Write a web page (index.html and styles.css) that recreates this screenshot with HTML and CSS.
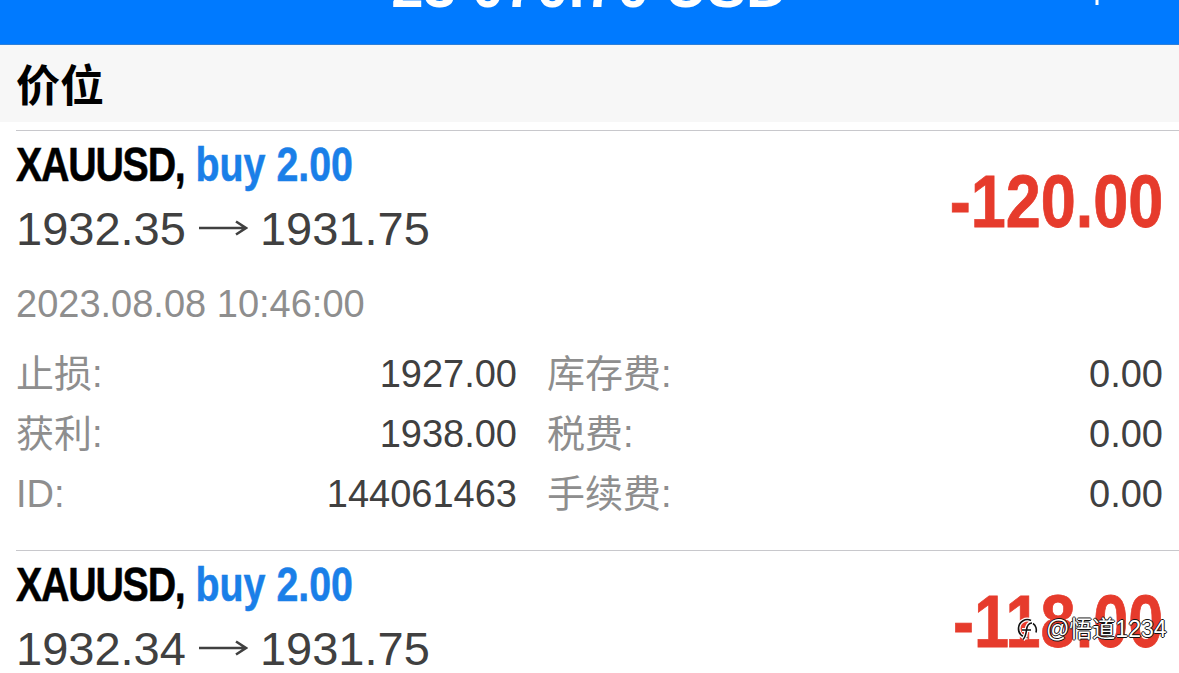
FILE: index.html
```html
<!DOCTYPE html>
<html lang="zh">
<head>
    <meta charset="UTF-8">
    <meta name="viewport" content="width=device-width, initial-scale=1.0">
    <title>交易</title>
    <link rel="stylesheet" href="styles.css">
</head>
<body>

    <header class="topbar">
        <span></span>
        <h1 class="balance">23 070.70 USD</h1>
        <svg class="add-icon" width="40" height="40" viewBox="0 0 40 40">
            <path d="M20 0v40M0 20h40" stroke="#fff" stroke-width="3" fill="none"/>
        </svg>
    </header>

    <div class="section-title">价位</div>

    <ul class="positions">
        <li class="position">
            <div class="position-head">
                <div class="position-main">
                    <div class="symbol"><span class="symbol-text"><span class="name">XAUUSD,</span> <span class="side">buy 2.00</span></span></div>
                    <div class="prices">1932.35<svg class="arrow" role="img" aria-label="→" width="50" height="20" viewBox="0 0 50 20"><path d="M1 10h47M38 3.5l10 6.5-10 6.5" stroke="#404040" stroke-width="2.6" fill="none"/></svg>1931.75</div>
                </div>
                <div class="profit"><span class="profit-text">-120.00</span></div>
            </div>
            <div class="opened">2023.08.08 10:46:00</div>
            <div class="details">
                <div class="detail"><span class="label">止损:</span><span class="value">1927.00</span></div>
                <div class="detail"><span class="label">库存费:</span><span class="value">0.00</span></div>
                <div class="detail"><span class="label">获利:</span><span class="value">1938.00</span></div>
                <div class="detail"><span class="label">税费:</span><span class="value">0.00</span></div>
                <div class="detail"><span class="label">ID:</span><span class="value">144061463</span></div>
                <div class="detail"><span class="label">手续费:</span><span class="value">0.00</span></div>
            </div>
        </li>
        <li class="position">
            <div class="position-head">
                <div class="position-main">
                    <div class="symbol"><span class="symbol-text"><span class="name">XAUUSD,</span> <span class="side">buy 2.00</span></span></div>
                    <div class="prices">1932.34<svg class="arrow" role="img" aria-label="→" width="50" height="20" viewBox="0 0 50 20"><path d="M1 10h47M38 3.5l10 6.5-10 6.5" stroke="#404040" stroke-width="2.6" fill="none"/></svg>1931.75</div>
                </div>
                <div class="profit"><span class="profit-text">-118.00</span></div>
            </div>
        </li>
    </ul>

    <!-- watermark over the second row -->
    <div class="watermark">
        <svg width="22" height="24" viewBox="0 0 22 24">
            <path d="M15 3.5C10 1 3 4 2.5 11c-.4 5.5 3.5 9.5 9 9.5" stroke="#fff" stroke-width="4" fill="none"/>
            <path d="M15 3.5C10 1 3 4 2.5 11c-.4 5.5 3.5 9.5 9 9.5" stroke="#111" stroke-width="1.6" fill="none"/>
            <path d="M16 6c-4 0-5 3-5.5 7-.4 3.5-1 7-3.5 9.5M6 13h9" stroke="#fff" stroke-width="4" fill="none"/>
            <path d="M16 6c-4 0-5 3-5.5 7-.4 3.5-1 7-3.5 9.5M6 13h9" stroke="#111" stroke-width="1.6" fill="none"/>
            <path d="M17 6.5c3 2 4 6 3 9" stroke="#111" stroke-width="1.6" fill="none"/>
        </svg>
        <span class="watermark-text">@悟道1234</span>
    </div>
</body>
</html>
```

FILE: styles.css
```css
:root {
    --ios-blue: #007aff;
    --buy-blue: #1a7fe8;
    --loss-red: #e63b2c;
    --section-grey: #f7f7f7;
    --separator: #c8c8cc;
    --text-dark: #404040;
    --text-grey: #8e8e8e;
    --main-font: "Liberation Sans", "Noto Sans CJK SC", sans-serif;
}

* {
    font-family: var(--main-font);
}

html, body {
    margin: 0;
    height: 100%;
    overflow: hidden;
}

body {
    position: relative;
    background-color: #fff;
}

.topbar {
    display: grid;
    grid-template-columns: 1fr auto 1fr;
    height: 44px;
    overflow: hidden;
    background-color: var(--ios-blue);
    border-bottom: 1px solid #2f80d8;
}
.topbar .balance {
    margin: -42px 0 0;
    font-size: 58px;
    line-height: 58px;
    font-weight: bold;
    color: #fff;
}
.topbar .add-icon {
    justify-self: end;
    margin: -35px 62px 0 0;
}

.section-title {
    height: 77px;
    padding-left: 16px;
    background-color: var(--section-grey);
    font-family: "Noto Sans CJK SC", sans-serif;
    font-size: 44px;
    line-height: 77px;
    font-weight: bold;
    color: #000;
}

.positions {
    list-style: none;
    margin: 8px 0 0;
    padding: 0;
}

.position {
    margin-left: 16px;
    padding: 6px 16px 26px 0;
    border-top: 1px solid var(--separator);
}

.position-head {
    display: flex;
    justify-content: space-between;
    align-items: center;
}

.symbol {
    height: 56px;
    font-size: 48px;
    line-height: 56px;
    font-weight: bold;
    color: #000;
    white-space: nowrap;
}
.symbol-text {
    display: inline-block;
    transform: scaleX(0.82);
    transform-origin: left center;
    -webkit-text-stroke: 0.5px currentColor;
}
.symbol .name {
    letter-spacing: -1.5px;
}
.symbol .side {
    color: var(--buy-blue);
}

.prices {
    font-size: 47px;
    line-height: 72px;
    color: var(--text-dark);
    white-space: nowrap;
}
.prices .arrow {
    margin: 0 12px 0 12px;
    vertical-align: 7px;
}

.profit {
    font-size: 75px;
    line-height: 75px;
    font-weight: bold;
    color: var(--loss-red);
}
.profit-text {
    display: inline-block;
    transform: scaleX(0.84);
    transform-origin: right center;
    -webkit-text-stroke: 0.8px currentColor;
}

.opened {
    font-size: 38px;
    line-height: 79px;
    color: var(--text-grey);
}

.details {
    display: grid;
    grid-template-columns: 501px 1fr;
    grid-auto-rows: 60px;
    column-gap: 30px;
}
.detail {
    display: flex;
    justify-content: space-between;
    align-items: baseline;
    font-size: 38px;
    line-height: 60px;
}
.detail .label {
    color: var(--text-grey);
}
.detail .value {
    color: var(--text-dark);
}

.watermark {
    position: absolute;
    left: 1016px;
    top: 615px;
    display: flex;
    align-items: center;
    gap: 8px;
}
.watermark-text {
    font-size: 23px;
    line-height: 28px;
    color: #fff;
    text-shadow: 1px 0 #111, -1px 0 #111, 0 1px #111, 0 -1px #111;
}
```
